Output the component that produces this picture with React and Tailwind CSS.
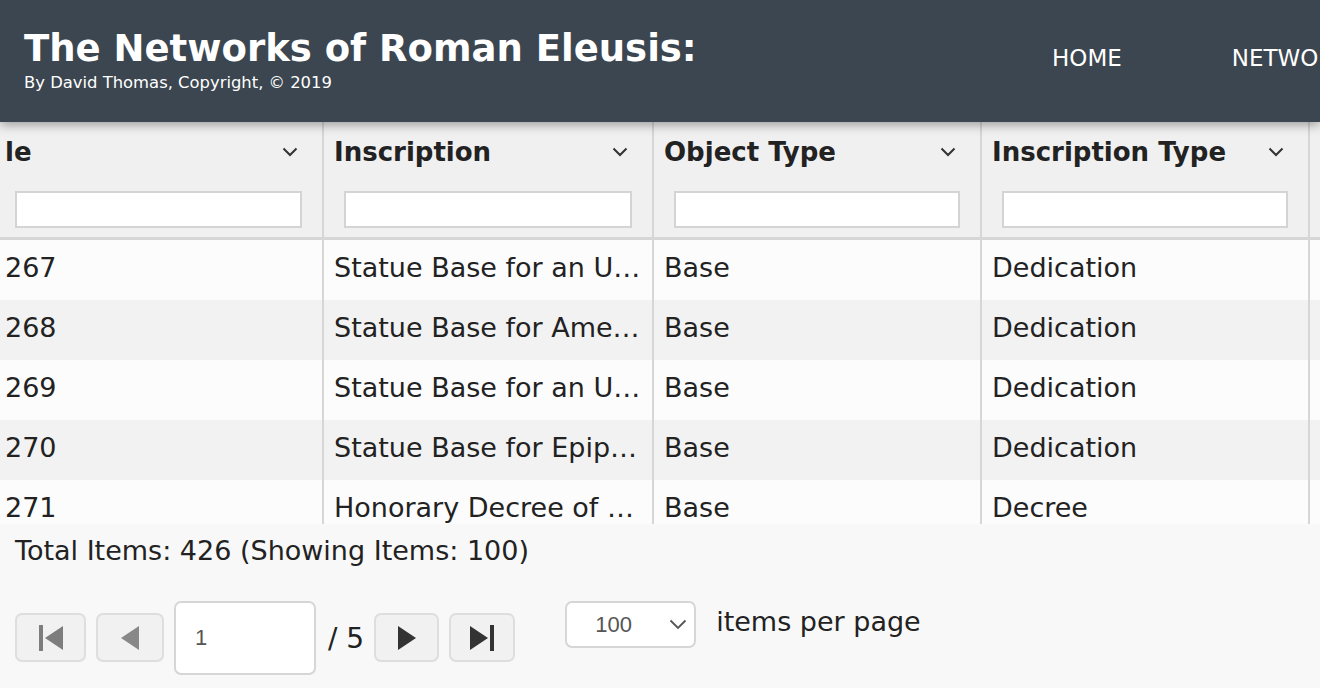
import React from 'react';

const columns = ['le', 'Inscription', 'Object Type', 'Inscription Type'];

const rows = [
  ['267', 'Statue Base for an U…', 'Base', 'Dedication'],
  ['268', 'Statue Base for Ame…', 'Base', 'Dedication'],
  ['269', 'Statue Base for an U…', 'Base', 'Dedication'],
  ['270', 'Statue Base for Epip…', 'Base', 'Dedication'],
  ['271', 'Honorary Decree of …', 'Base', 'Decree'],
];

// widths of the visible columns, first one is scrolled a bit to the left
const widths = ['w-[329px] ml-[-5px]', 'w-[330px]', 'w-[328px]', 'w-[328px]'];

function Chevron() {
  return (
    <svg width="16" height="10" viewBox="0 0 16 10" className="shrink-0">
      <path d="M1.5 1.5 L8 8 L14.5 1.5" fill="none" stroke="#333" strokeWidth="2" />
    </svg>
  );
}

function PagerButton({ children, className }) {
  return (
    <button className={'flex items-center justify-center h-[49px] rounded-[7px] border-2 border-[#dedede] bg-[#f1f1f1] ' + className}>
      {children}
    </button>
  );
}

function App() {
  const font = { fontFamily: '"DejaVu Sans", "Liberation Sans", sans-serif' };

  return (
    <div className="w-[1320px] h-[688px] overflow-hidden bg-[#f8f8f8] flex flex-col" style={font}>
      {/* top bar */}
      <header className="relative z-10 h-[122px] shrink-0 bg-[#3b4650] flex overflow-hidden shadow-[0_3px_10px_rgba(0,0,0,0.35)]">
        <div className="w-[1052px] shrink-0 pl-6 pt-[30px] flex flex-col">
          <h1 className="text-[37px] leading-none font-bold text-white whitespace-nowrap">The Networks of Roman Eleusis:</h1>
          <p className="mt-[8px] text-[16.4px] leading-none text-white whitespace-nowrap">By David Thomas, Copyright, © 2019</p>
        </div>
        <nav className="flex gap-[110px] pt-[47px] text-[23px] leading-none text-white whitespace-nowrap">
          <span>HOME</span>
          <span>NETWORKS</span>
        </nav>
      </header>

      {/* grid header */}
      <div className="flex h-[118px] shrink-0 bg-[#f0f0f0] border-b-[3px] border-[#d6d6d6] overflow-hidden">
        {columns.map((c, i) => (
          <div key={c} className={'shrink-0 flex flex-col border-r-2 border-[#d6d6d6] ' + widths[i]}>
            <div className="h-[60px] flex items-center justify-between pl-[10px] pr-[24px]">
              <span className="text-[26px] font-bold text-[#222] whitespace-nowrap">{c}</span>
              <Chevron />
            </div>
            <input className="mt-[9px] mx-[20px] h-[37px] border-2 border-[#d4d4d4] bg-white outline-none" />
          </div>
        ))}
        <div className="flex-1" />
      </div>

      {/* grid body */}
      <div className="h-[284px] shrink-0 overflow-hidden">
        {rows.map((r, ri) => (
          <div key={ri} className={'flex h-[60px] ' + (ri % 2 === 0 ? 'bg-[#fcfcfc]' : 'bg-[#f2f2f2]')}>
            {r.map((cell, ci) => (
              <div
                key={ci}
                className={'shrink-0 flex items-center pb-[3px] px-[10px] border-r-2 border-[#d6d6d6] text-[27px] text-[#222] whitespace-nowrap overflow-hidden ' + widths[ci]}
              >
                {cell}
              </div>
            ))}
            <div className="flex-1" />
          </div>
        ))}
      </div>

      {/* footer / pager */}
      <div className="flex-1 pl-[15px] pt-[12px]">
        <p className="text-[27px] leading-[30px] text-[#222] whitespace-nowrap">Total Items: 426 (Showing Items: 100)</p>
        <div className="mt-[35px] flex items-start">
          <PagerButton className="w-[71px] mt-[12px]">
            <svg width="24" height="26" viewBox="0 0 24 26">
              <rect x="0" y="0" width="4" height="26" fill="#7d7d7d" />
              <path d="M24 1 L6 13 L24 25 Z" fill="#7d7d7d" />
            </svg>
          </PagerButton>
          <PagerButton className="w-[68px] mt-[12px] ml-[10px]">
            <svg width="18" height="24" viewBox="0 0 18 24">
              <path d="M18 0 L0 12 L18 24 Z" fill="#888" />
            </svg>
          </PagerButton>
          <input
            defaultValue="1"
            className="ml-[10px] w-[142px] h-[74px] rounded-[7px] border-2 border-[#d6d6d6] bg-white pl-[19px] text-[22px] text-[#555] outline-none"
            style={{ fontFamily: '"Liberation Sans", sans-serif' }}
          />
          <span className="ml-[12px] mt-[21px] text-[28px] leading-[34px] text-[#222]">/ 5</span>
          <PagerButton className="w-[65px] mt-[12px] ml-[10px]">
            <svg width="18" height="24" viewBox="0 0 18 24">
              <path d="M0 0 L18 12 L0 24 Z" fill="#333" />
            </svg>
          </PagerButton>
          <PagerButton className="w-[66px] mt-[12px] ml-[10px]">
            <svg width="24" height="26" viewBox="0 0 24 26">
              <path d="M0 1 L18 13 L0 25 Z" fill="#333" />
              <rect x="20" y="0" width="4" height="26" fill="#333" />
            </svg>
          </PagerButton>
          <div className="ml-[50px] w-[131px] h-[47px] rounded-[7px] border-2 border-[#d6d6d6] bg-white flex items-center justify-between pl-[28px] pr-[7px]">
            <span className="text-[22px] text-[#555]" style={{ fontFamily: '"Liberation Sans", sans-serif' }}>100</span>
            <svg width="18" height="11" viewBox="0 0 18 11">
              <path d="M1.5 1.5 L9 9 L16.5 1.5" fill="none" stroke="#555" strokeWidth="1.8" />
            </svg>
          </div>
          <span className="ml-[20px] mt-[4px] text-[27px] leading-[34px] text-[#222] whitespace-nowrap">items per page</span>
        </div>
      </div>
    </div>
  );
}

export default App;
